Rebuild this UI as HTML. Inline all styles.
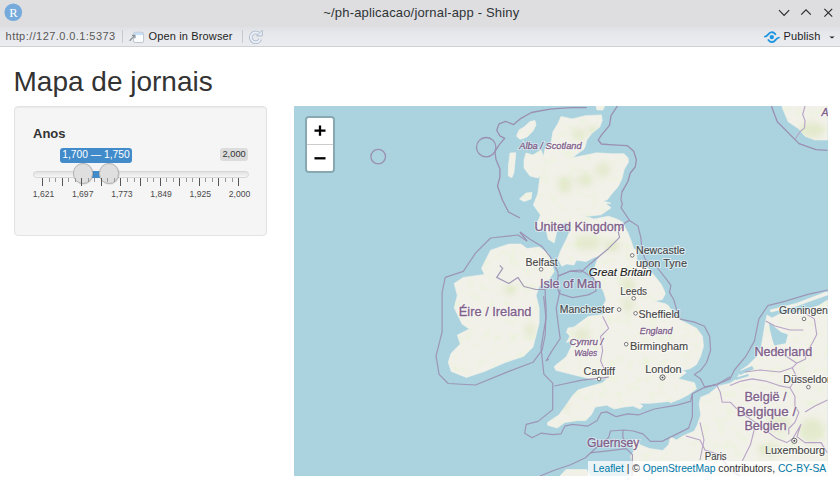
<!DOCTYPE html>
<html><head><meta charset="utf-8">
<style>
*{margin:0;padding:0;box-sizing:border-box}
html,body{width:840px;height:495px;overflow:hidden;background:#fff;font-family:"Liberation Sans",sans-serif;position:relative}
.abs{position:absolute;white-space:nowrap}
#title{left:0;top:0;width:840px;height:27px;background:#dedee1}
#tb{left:0;top:26.5px;width:840px;height:20.5px;background:linear-gradient(#dfe0e3 0,#e6e7ea 5px,#ebecef 100%);border-bottom:1px solid #cfd0d4}
.sep{width:1px;height:13px;background:#c8c9cc;top:30px}
#well{left:14px;top:106px;width:252.5px;height:129.5px;background:#f5f5f5;border:1px solid #e3e3e3;border-radius:4px;box-shadow:inset 0 1px 1px rgba(0,0,0,.05)}
#map{left:294px;top:106px;width:533.5px;height:370px;background:#aad3df;overflow:hidden}
.handle{top:163px;width:20.6px;height:20.6px;border-radius:50%;background:#dfdfdf;border:1px solid #b4b4b4;box-shadow:0.5px 0.5px 1px rgba(0,0,0,.15)}
.glab{top:188.6px;width:40px;text-align:center;font-size:8.6px;color:#4a4a4a}
</style></head><body>
<div id="title" class="abs"></div>
<svg class="abs" style="left:0;top:0" width="840" height="47">
<circle cx="13.3" cy="12.2" r="8.8" fill="#75aadb"/>
<text x="13.3" y="16.6" text-anchor="middle" font-family="Liberation Serif" font-size="12.5" fill="#fff">R</text>
<path d="M779 10.2 L784.1 15.4 L789.2 10.2" fill="none" stroke="#2a2a2a" stroke-width="1.15"/>
<path d="M801.2 14.6 L806 9.8 L810.8 14.6" fill="none" stroke="#2a2a2a" stroke-width="1.15"/>
<path d="M824.4 8.8 L832.2 16.6 M832.2 8.8 L824.4 16.6" fill="none" stroke="#2a2a2a" stroke-width="1.15"/>
</svg>
<div class="abs" style="left:323.3px;top:5.2px;font-size:13px;letter-spacing:0.17px;color:#2e3436">~/ph-aplicacao/jornal-app - Shiny</div>
<div id="tb" class="abs"></div>
<div class="abs" style="left:5.6px;top:30.2px;font-size:11px;letter-spacing:0.43px;color:#585858">http://127.0.0.1:5373</div>
<div class="abs sep" style="left:121.5px"></div>
<div class="abs sep" style="left:242px"></div>
<svg class="abs" style="left:124px;top:27px" width="24" height="20">
<rect x="9.6" y="5.3" width="10" height="10.2" rx="1.5" fill="#fbfcfd" stroke="#b9c0c8" stroke-width="0.9"/>
<rect x="10.1" y="5.8" width="9" height="2.3" fill="#c6e1f7"/>
<path d="M5.6 13.7 L10.6 8.6 M8 8.4 L10.9 8.4 L10.9 11.3" fill="none" stroke="#8a949c" stroke-width="1.3"/>
</svg>
<div class="abs" style="left:148.6px;top:30.2px;font-size:11px;letter-spacing:0.14px;color:#1e1e1e">Open in Browser</div>
<svg class="abs" style="left:244px;top:27px" width="24" height="20">
<path d="M16.3 12.2 A4.9 4.9 0 1 1 14.6 6.4" fill="none" stroke="#aab6c6" stroke-width="3.6"/>
<path d="M16.3 12.2 A4.9 4.9 0 1 1 14.6 6.4" fill="none" stroke="#e9f0fa" stroke-width="2"/>
<path d="M12.6 8.9 L18.3 8.9 L18.3 3.2 Z" fill="#e9f0fa" stroke="#aab6c6" stroke-width="0.9" stroke-linejoin="round"/>
</svg>
<svg class="abs" style="left:760px;top:27px" width="80" height="20">
<path d="M4.9 9.6 C6.2 9.6 7.2 8.6 8.2 7.4 C9.6 5.6 11 5 12.4 5.2 C13.8 5.4 14.8 6.4 15.4 7.2" fill="none" stroke="#1f96e2" stroke-width="1.9" stroke-linecap="round"/>
<path d="M18.9 10.6 C17.6 10.6 16.6 11.6 15.6 12.8 C14.2 14.6 12.8 15.2 11.4 15 C10 14.8 9 13.8 8.4 13" fill="none" stroke="#1f96e2" stroke-width="1.9" stroke-linecap="round"/>
<circle cx="11.8" cy="10.1" r="2.2" fill="#1f96e2"/>
<path d="M69.3 9.4 L74.7 9.4 L72 11.6 Z" fill="#222"/>
</svg>
<div class="abs" style="left:783.6px;top:30.2px;font-size:11px;letter-spacing:0.1px;color:#1e1e1e">Publish</div>

<div class="abs" style="left:13.5px;top:65.5px;font-size:28px;color:#333">Mapa de jornais</div>
<div id="well" class="abs"></div>
<div class="abs" style="left:33px;top:126px;font-size:13px;font-weight:bold;color:#333">Anos</div>


<div class="abs" style="left:32.5px;top:170.8px;width:216px;height:6.8px;border-radius:4px;background:linear-gradient(#e2e2e2,#f6f6f6);border:1px solid #d6d6d6"></div>
<div class="abs" style="left:83px;top:170.8px;width:26px;height:6.8px;background:#428bca"></div>
<div class="abs handle" style="left:72.5px"></div>
<div class="abs handle" style="left:98.7px"></div>
<div class="abs" style="left:60px;top:148px;width:72px;height:14.5px;border-radius:3px;background:#428bca;color:#fff;font-size:10.3px;line-height:14.5px;text-align:center">1,700 — 1,750</div>
<div class="abs" style="left:220px;top:148.2px;width:28.2px;height:12.5px;border-radius:3px;background:#dcdcdc;color:#333;font-size:9.3px;line-height:12.5px;text-align:center">2,000</div>
<div class="abs" style="left:42.0px;top:178px;width:1px;height:7.5px;background:#555"></div>
<div class="abs" style="left:48.5px;top:178px;width:1px;height:3.5px;background:#999"></div>
<div class="abs" style="left:55.1px;top:178px;width:1px;height:3.5px;background:#999"></div>
<div class="abs" style="left:61.6px;top:178px;width:1px;height:7.5px;background:#555"></div>
<div class="abs" style="left:68.1px;top:178px;width:1px;height:3.5px;background:#999"></div>
<div class="abs" style="left:74.7px;top:178px;width:1px;height:3.5px;background:#999"></div>
<div class="abs" style="left:81.2px;top:178px;width:1px;height:7.5px;background:#555"></div>
<div class="abs" style="left:87.7px;top:178px;width:1px;height:3.5px;background:#999"></div>
<div class="abs" style="left:94.3px;top:178px;width:1px;height:3.5px;background:#999"></div>
<div class="abs" style="left:100.8px;top:178px;width:1px;height:7.5px;background:#555"></div>
<div class="abs" style="left:107.3px;top:178px;width:1px;height:3.5px;background:#999"></div>
<div class="abs" style="left:113.9px;top:178px;width:1px;height:3.5px;background:#999"></div>
<div class="abs" style="left:120.4px;top:178px;width:1px;height:7.5px;background:#555"></div>
<div class="abs" style="left:126.9px;top:178px;width:1px;height:3.5px;background:#999"></div>
<div class="abs" style="left:133.5px;top:178px;width:1px;height:3.5px;background:#999"></div>
<div class="abs" style="left:140.0px;top:178px;width:1px;height:7.5px;background:#555"></div>
<div class="abs" style="left:146.5px;top:178px;width:1px;height:3.5px;background:#999"></div>
<div class="abs" style="left:153.1px;top:178px;width:1px;height:3.5px;background:#999"></div>
<div class="abs" style="left:159.6px;top:178px;width:1px;height:7.5px;background:#555"></div>
<div class="abs" style="left:166.1px;top:178px;width:1px;height:3.5px;background:#999"></div>
<div class="abs" style="left:172.7px;top:178px;width:1px;height:3.5px;background:#999"></div>
<div class="abs" style="left:179.2px;top:178px;width:1px;height:7.5px;background:#555"></div>
<div class="abs" style="left:185.7px;top:178px;width:1px;height:3.5px;background:#999"></div>
<div class="abs" style="left:192.3px;top:178px;width:1px;height:3.5px;background:#999"></div>
<div class="abs" style="left:198.8px;top:178px;width:1px;height:7.5px;background:#555"></div>
<div class="abs" style="left:205.3px;top:178px;width:1px;height:3.5px;background:#999"></div>
<div class="abs" style="left:211.9px;top:178px;width:1px;height:3.5px;background:#999"></div>
<div class="abs" style="left:218.4px;top:178px;width:1px;height:7.5px;background:#555"></div>
<div class="abs" style="left:224.9px;top:178px;width:1px;height:3.5px;background:#999"></div>
<div class="abs" style="left:231.5px;top:178px;width:1px;height:3.5px;background:#999"></div>
<div class="abs" style="left:238.0px;top:178px;width:1px;height:7.5px;background:#555"></div>
<div class="abs glab" style="left:23.5px">1,621</div>
<div class="abs glab" style="left:62.7px">1,697</div>
<div class="abs glab" style="left:101.9px">1,773</div>
<div class="abs glab" style="left:141.1px">1,849</div>
<div class="abs glab" style="left:180.3px">1,925</div>
<div class="abs glab" style="left:219.5px">2,000</div>

<!--MAP-->
<svg class="abs" style="left:294px;top:106px" width="533.5" height="370" viewBox="294 106 533.5 370">
<rect x="294" y="106" width="534" height="370" fill="#aad3df"/>
<defs><clipPath id="lc"><path d="M561.0,116.5 L572.3,118.9 L585.2,115.7 L601.4,114.9 L602.2,120.5 L599.8,127.0 L591.7,133.5 L586.8,140.0 L585.2,146.4 L583.6,149.6 L578.8,152.8 L572.3,157.7 L588.5,154.5 L596.5,152.8 L612.7,153.7 L624.0,153.7 L628.0,157.7 L628.5,162.1 L624.2,169.4 L621.8,179.1 L618.2,186.4 L612.1,193.6 L607.3,199.7 L603.0,201.0 L610.9,203.3 L605.4,203.5 L611.1,207.7 L601.2,214.8 L588.5,216.2 L580.0,214.8 L594.1,219.0 L608.3,216.2 L616.7,219.0 L622.4,221.9 L625.2,227.5 L628.1,233.2 L630.9,240.2 L633.7,248.7 L636.3,250.0 L637.0,259.9 L648.3,268.4 L655.4,276.9 L661.0,284.0 L663.8,289.6 L665.3,293.8 L662.4,299.5 L654.0,300.9 L665.3,303.7 L668.0,305.2 L671.0,309.4 L675.0,316.0 L680.3,320.1 L688.4,324.1 L696.5,328.2 L702.5,336.3 L703.5,346.4 L700.5,356.5 L696.5,364.5 L690.4,368.6 L682.3,370.6 L686.4,372.6 L678.3,378.7 L686.4,380.7 L694.4,382.7 L696.5,388.8 L688.4,394.8 L680.3,398.9 L670.2,402.9 L669.5,401.4 L650.5,403.3 L639.0,403.3 L643.0,406.0 L640.0,409.0 L633.0,406.0 L623.8,407.1 L614.3,409.0 L606.7,405.2 L595.2,407.1 L591.4,414.8 L585.7,420.5 L578.1,420.5 L564.8,422.4 L557.1,428.1 L547.6,425.2 L547.6,422.4 L559.0,414.8 L568.6,401.4 L572.4,395.7 L578.1,390.0 L585.8,387.5 L602.8,382.7 L607.6,377.8 L597.9,380.3 L585.8,377.8 L571.2,374.2 L556.7,370.6 L556.2,370.8 L554.1,366.8 L556.2,364.7 L566.3,356.7 L570.3,348.6 L574.0,340.0 L566.3,342.5 L570.0,336.0 L566.3,332.4 L568.0,328.0 L574.0,327.0 L580.4,322.3 L588.5,316.3 L604.6,314.2 L603.0,306.0 L606.0,300.0 L604.0,292.7 L600.0,284.5 L593.3,277.2 L594.5,267.5 L597.0,260.2 L600.6,255.4 L593.3,257.8 L586.1,261.5 L576.4,260.2 L573.9,265.1 L566.7,263.9 L561.8,266.3 L557.9,258.6 L560.3,251.4 L566.4,239.2 L570.0,230.8 L566.0,222.0 L560.0,226.0 L556.7,232.0 L554.2,242.9 L548.2,239.2 L545.8,228.3 L544.4,220.4 L533.3,204.9 L537.8,193.8 L540.0,176.0 L540.0,170.6 L543.2,159.3 L544.8,149.6 L551.3,141.5 L552.9,131.8 L557.8,123.8 Z M490.6,250.2 L508.8,244.1 L520.9,244.1 L527.0,248.6 L539.1,247.1 L548.2,253.2 L551.2,262.3 L554.2,271.4 L548.2,280.5 L539.1,286.5 L536.1,295.6 L539.1,307.7 L539.1,322.9 L536.1,335.0 L533.0,347.1 L523.9,356.2 L505.8,362.3 L484.5,371.4 L466.4,377.4 L451.2,371.4 L448.2,362.3 L451.2,353.2 L460.3,344.1 L457.3,335.0 L469.4,328.9 L462.0,324.0 L454.2,307.7 L457.3,295.6 L454.2,283.5 L463.3,277.4 L484.5,274.4 L481.5,268.3 L484.5,262.3 Z M827.5,300.0 L818.9,305.6 L796.7,312.2 L778.9,314.4 L772.0,318.0 L767.0,315.0 L765.6,321.1 L763.3,334.4 L761.1,347.8 L756.7,356.7 L747.8,365.6 L741.1,370.0 L736.7,378.9 L730.0,383.3 L718.5,385.9 L708.8,393.9 L700.7,397.2 L699.1,403.6 L700.7,415.0 L697.5,424.6 L694.2,431.1 L682.9,436.0 L676.5,440.0 L670.5,437.1 L668.6,444.8 L662.9,450.5 L649.5,448.6 L640.0,444.8 L636.2,439.0 L632.4,442.9 L634.3,450.5 L630.5,456.2 L632.4,463.8 L630.0,476.0 L827.5,476.0 Z M782.1,106.0 L782.1,107.3 L788.2,121.8 L799.0,129.0 L805.0,136.3 L814.8,140.0 L827.5,140.0 L827.5,106.0 Z M530.0,121.5 L535.0,120.5 L536.0,125.0 L533.0,131.0 L527.0,137.0 L520.0,139.5 L516.5,136.0 L519.0,130.0 L524.0,127.0 Z M526.0,153.0 L533.0,155.0 L541.0,150.0 L545.0,160.0 L543.0,172.0 L538.0,178.0 L530.0,176.0 L524.0,168.0 L524.0,160.0 Z M510.0,153.0 L515.8,152.7 L515.0,162.0 L514.0,172.0 L512.0,177.7 L508.3,176.0 L508.5,165.0 Z M566.0,469.5 L586.7,469.5 L590.0,476.0 L560.0,476.0 Z M596.0,106.0 L604.6,106.0 L603.0,110.0 L597.0,110.0 Z M770.0,310.0 L796.7,303.3 L807.8,298.9 L825.6,292.2 L827.5,292.0 L827.5,295.0 L809.0,301.5 L797.0,306.0 L771.0,312.0 Z M519.5,199.0 L526.0,193.0 L532.0,192.5 L531.0,199.0 L524.0,201.5 Z M541.0,214.0 L545.0,210.0 L547.0,216.0 L544.0,228.0 L539.0,232.0 L536.0,226.0 Z"/></clipPath><filter id="nz" x="0" y="0" width="100%" height="100%"><feTurbulence type="fractalNoise" baseFrequency="0.12" numOctaves="2" seed="7"/><feColorMatrix type="matrix" values="0 0 0 0 0.82 0 0 0 0 0.89 0 0 0 0 0.70 2.4 0 0 0 -1.22"/></filter><filter id="bl" x="-50%" y="-50%" width="200%" height="200%"><feGaussianBlur stdDeviation="3"/></filter></defs>
<path d="M561.0,116.5 L572.3,118.9 L585.2,115.7 L601.4,114.9 L602.2,120.5 L599.8,127.0 L591.7,133.5 L586.8,140.0 L585.2,146.4 L583.6,149.6 L578.8,152.8 L572.3,157.7 L588.5,154.5 L596.5,152.8 L612.7,153.7 L624.0,153.7 L628.0,157.7 L628.5,162.1 L624.2,169.4 L621.8,179.1 L618.2,186.4 L612.1,193.6 L607.3,199.7 L603.0,201.0 L610.9,203.3 L605.4,203.5 L611.1,207.7 L601.2,214.8 L588.5,216.2 L580.0,214.8 L594.1,219.0 L608.3,216.2 L616.7,219.0 L622.4,221.9 L625.2,227.5 L628.1,233.2 L630.9,240.2 L633.7,248.7 L636.3,250.0 L637.0,259.9 L648.3,268.4 L655.4,276.9 L661.0,284.0 L663.8,289.6 L665.3,293.8 L662.4,299.5 L654.0,300.9 L665.3,303.7 L668.0,305.2 L671.0,309.4 L675.0,316.0 L680.3,320.1 L688.4,324.1 L696.5,328.2 L702.5,336.3 L703.5,346.4 L700.5,356.5 L696.5,364.5 L690.4,368.6 L682.3,370.6 L686.4,372.6 L678.3,378.7 L686.4,380.7 L694.4,382.7 L696.5,388.8 L688.4,394.8 L680.3,398.9 L670.2,402.9 L669.5,401.4 L650.5,403.3 L639.0,403.3 L643.0,406.0 L640.0,409.0 L633.0,406.0 L623.8,407.1 L614.3,409.0 L606.7,405.2 L595.2,407.1 L591.4,414.8 L585.7,420.5 L578.1,420.5 L564.8,422.4 L557.1,428.1 L547.6,425.2 L547.6,422.4 L559.0,414.8 L568.6,401.4 L572.4,395.7 L578.1,390.0 L585.8,387.5 L602.8,382.7 L607.6,377.8 L597.9,380.3 L585.8,377.8 L571.2,374.2 L556.7,370.6 L556.2,370.8 L554.1,366.8 L556.2,364.7 L566.3,356.7 L570.3,348.6 L574.0,340.0 L566.3,342.5 L570.0,336.0 L566.3,332.4 L568.0,328.0 L574.0,327.0 L580.4,322.3 L588.5,316.3 L604.6,314.2 L603.0,306.0 L606.0,300.0 L604.0,292.7 L600.0,284.5 L593.3,277.2 L594.5,267.5 L597.0,260.2 L600.6,255.4 L593.3,257.8 L586.1,261.5 L576.4,260.2 L573.9,265.1 L566.7,263.9 L561.8,266.3 L557.9,258.6 L560.3,251.4 L566.4,239.2 L570.0,230.8 L566.0,222.0 L560.0,226.0 L556.7,232.0 L554.2,242.9 L548.2,239.2 L545.8,228.3 L544.4,220.4 L533.3,204.9 L537.8,193.8 L540.0,176.0 L540.0,170.6 L543.2,159.3 L544.8,149.6 L551.3,141.5 L552.9,131.8 L557.8,123.8 Z M490.6,250.2 L508.8,244.1 L520.9,244.1 L527.0,248.6 L539.1,247.1 L548.2,253.2 L551.2,262.3 L554.2,271.4 L548.2,280.5 L539.1,286.5 L536.1,295.6 L539.1,307.7 L539.1,322.9 L536.1,335.0 L533.0,347.1 L523.9,356.2 L505.8,362.3 L484.5,371.4 L466.4,377.4 L451.2,371.4 L448.2,362.3 L451.2,353.2 L460.3,344.1 L457.3,335.0 L469.4,328.9 L462.0,324.0 L454.2,307.7 L457.3,295.6 L454.2,283.5 L463.3,277.4 L484.5,274.4 L481.5,268.3 L484.5,262.3 Z M827.5,300.0 L818.9,305.6 L796.7,312.2 L778.9,314.4 L772.0,318.0 L767.0,315.0 L765.6,321.1 L763.3,334.4 L761.1,347.8 L756.7,356.7 L747.8,365.6 L741.1,370.0 L736.7,378.9 L730.0,383.3 L718.5,385.9 L708.8,393.9 L700.7,397.2 L699.1,403.6 L700.7,415.0 L697.5,424.6 L694.2,431.1 L682.9,436.0 L676.5,440.0 L670.5,437.1 L668.6,444.8 L662.9,450.5 L649.5,448.6 L640.0,444.8 L636.2,439.0 L632.4,442.9 L634.3,450.5 L630.5,456.2 L632.4,463.8 L630.0,476.0 L827.5,476.0 Z M782.1,106.0 L782.1,107.3 L788.2,121.8 L799.0,129.0 L805.0,136.3 L814.8,140.0 L827.5,140.0 L827.5,106.0 Z M530.0,121.5 L535.0,120.5 L536.0,125.0 L533.0,131.0 L527.0,137.0 L520.0,139.5 L516.5,136.0 L519.0,130.0 L524.0,127.0 Z M526.0,153.0 L533.0,155.0 L541.0,150.0 L545.0,160.0 L543.0,172.0 L538.0,178.0 L530.0,176.0 L524.0,168.0 L524.0,160.0 Z M510.0,153.0 L515.8,152.7 L515.0,162.0 L514.0,172.0 L512.0,177.7 L508.3,176.0 L508.5,165.0 Z M566.0,469.5 L586.7,469.5 L590.0,476.0 L560.0,476.0 Z M596.0,106.0 L604.6,106.0 L603.0,110.0 L597.0,110.0 Z M770.0,310.0 L796.7,303.3 L807.8,298.9 L825.6,292.2 L827.5,292.0 L827.5,295.0 L809.0,301.5 L797.0,306.0 L771.0,312.0 Z M519.5,199.0 L526.0,193.0 L532.0,192.5 L531.0,199.0 L524.0,201.5 Z M541.0,214.0 L545.0,210.0 L547.0,216.0 L544.0,228.0 L539.0,232.0 L536.0,226.0 Z" fill="#f2f1e9" stroke="#f2f1e9" stroke-width="0.6" stroke-linejoin="round"/>
<g clip-path="url(#lc)"><rect x="294" y="106" width="534" height="370" filter="url(#nz)"/>
<ellipse cx="579" cy="134" rx="7" ry="5" fill="#d6e2b2" opacity="0.5" filter="url(#bl)"/>
<ellipse cx="593" cy="130" rx="5" ry="4" fill="#d6e2b2" opacity="0.5" filter="url(#bl)"/>
<ellipse cx="603" cy="170" rx="8" ry="6" fill="#d6e2b2" opacity="0.5" filter="url(#bl)"/>
<ellipse cx="585" cy="180" rx="8" ry="6" fill="#d6e2b2" opacity="0.5" filter="url(#bl)"/>
<ellipse cx="565" cy="185" rx="7" ry="8" fill="#d6e2b2" opacity="0.5" filter="url(#bl)"/>
<ellipse cx="588" cy="243" rx="12" ry="7" fill="#d6e2b2" opacity="0.5" filter="url(#bl)"/>
<ellipse cx="612" cy="246" rx="8" ry="6" fill="#d6e2b2" opacity="0.5" filter="url(#bl)"/>
<ellipse cx="628" cy="285" rx="6" ry="8" fill="#d6e2b2" opacity="0.5" filter="url(#bl)"/>
<ellipse cx="628" cy="305" rx="5" ry="7" fill="#d6e2b2" opacity="0.5" filter="url(#bl)"/>
<ellipse cx="582" cy="335" rx="8" ry="6" fill="#d6e2b2" opacity="0.5" filter="url(#bl)"/>
<ellipse cx="563" cy="405" rx="5" ry="5" fill="#d6e2b2" opacity="0.5" filter="url(#bl)"/>
<ellipse cx="778" cy="424" rx="12" ry="8" fill="#d6e2b2" opacity="0.5" filter="url(#bl)"/>
<ellipse cx="812" cy="430" rx="12" ry="12" fill="#d6e2b2" opacity="0.5" filter="url(#bl)"/>
<ellipse cx="812" cy="130" rx="12" ry="8" fill="#d6e2b2" opacity="0.5" filter="url(#bl)"/>
<ellipse cx="530" cy="330" rx="5" ry="6" fill="#d6e2b2" opacity="0.5" filter="url(#bl)"/>
<ellipse cx="510" cy="290" rx="6" ry="5" fill="#d6e2b2" opacity="0.5" filter="url(#bl)"/>
<ellipse cx="770" cy="450" rx="12" ry="6" fill="#d6e2b2" opacity="0.5" filter="url(#bl)"/>
</g>
<path d="M768.9,322.2 L781.1,332.2 L787.8,334.4 L785.6,343.3 L774.4,345.6 L772.2,338.9 L770.0,330.0 Z" fill="#aad3df"/><path d="M738,372 L752,366 L754,369 L740,375Z M735,378 L748,374 L749,376 L736,380Z" fill="#aad3df"/>
<path d="M550.0,109.2 L559.4,108.4 L571.7,107.7 L586.7,107.7" fill="none" stroke="#9b8fb1" stroke-width="1.3" stroke-linejoin="round"/>
<path d="M617.5,106.0 L611.0,115.7 L609.5,125.4 L601.4,135.1 L598.2,140.0 L601.4,144.0 L612.7,144.8 L627.2,145.6 L633.7,151.2 L636.4,159.7 L635.2,167.0 L630.3,173.0 L627.9,181.5 L621.8,192.4" fill="none" stroke="#9b8fb1" stroke-width="1.3" stroke-linejoin="round"/>
<path d="M550.0,109.2 L531.4,112.5 L520.1,118.9 L513.6,124.6 L505.6,121.4 L499.1,123.8 L496.7,130.2 L499.9,135.9 L504.7,138.3 L499.1,144.8 L495.0,151.3 L495.9,159.3 L499.9,169.0 L499.9,177.1 L497.5,186.0 L502.4,200.0 L508.5,212.0 L520.0,218.0" fill="none" stroke="#9b8fb1" stroke-width="1.3" stroke-linejoin="round"/>
<path d="M527.0,241.1 L520.0,232.0" fill="none" stroke="#9b8fb1" stroke-width="1.3" stroke-linejoin="round"/>
<path d="M771.8,106.0 L771.8,107.3 L777.3,121.8 L799.0,143.6 L816.0,149.7 L827.5,150.3" fill="none" stroke="#9b8fb1" stroke-width="1.3" stroke-linejoin="round"/>
<circle cx="378.2" cy="156.6" r="7.3" fill="none" stroke="#9b8fb1" stroke-width="1.3"/>
<circle cx="486.2" cy="147.2" r="9.7" fill="none" stroke="#9b8fb1" stroke-width="1.3"/>
<path d="M629.5,220.4 L625.2,222.6 L618.2,231.7 L619.6,237.4 L608.3,248.7 L599.8,255.8 L590.0,264.0 L581.0,272.0 L570.0,271.2 L558.2,276.0" fill="none" stroke="#9b8fb1" stroke-width="1.2" stroke-linejoin="round" opacity="0.9"/>
<path d="M621.8,192.4 L621.0,200.0 L622.4,203.5 L621.0,207.7 L629.5,220.4 L638.0,226.1 L640.8,237.4 L642.2,251.5 L645.5,259.9 L656.8,267.0 L666.7,279.7 L670.9,285.4 L669.5,292.4 L673.7,299.5 L676.6,309.4 L680.3,319.1 L694.4,322.1 L704.5,326.2 L709.6,336.3 L710.6,350.4 L706.6,362.5 L700.5,370.6 L694.4,374.6 L700.5,378.7 L704.5,386.8 L716.7,384.7 L730.0,376.7" fill="none" stroke="#9b8fb1" stroke-width="1.2" stroke-linejoin="round" opacity="0.9"/>
<path d="M556.7,285.7 L559.4,293.6 L572.5,297.6 L588.2,294.9 L596.1,291.0 L593.5,277.9 L580.4,270.0 L570.0,271.2 L558.2,276.0 L556.7,285.7" fill="none" stroke="#9b8fb1" stroke-width="1.2" stroke-linejoin="round" opacity="0.9"/>
<path d="M499.7,265.3 L502.7,268.3 L496.7,277.4 L508.8,283.5 L517.9,277.4 L523.9,286.5 L536.1,289.5 L545.2,289.5 L545.2,295.6 L546.2,309.4 L545.2,335.0 L542.1,350.2 L533.0,362.3 L508.8,371.4 L475.5,385.0 L448.2,383.5 L439.1,374.4 L436.0,356.2 L442.1,331.8 L442.1,292.6 L445.2,277.4 L463.3,271.4 L475.5,253.2 L490.6,238.0 L517.9,235.0 L527.0,241.1" fill="none" stroke="#9b8fb1" stroke-width="1.2" stroke-linejoin="round" opacity="0.9"/>
<path d="M520.0,232.0 L530.0,239.2 L542.1,246.5 L550.6,257.4 L557.9,272.0 L558.2,276.0" fill="none" stroke="#9b8fb1" stroke-width="1.2" stroke-linejoin="round" opacity="0.9"/>
<path d="M543.6,296.2 L546.0,318.0 L541.0,347.7 L543.9,374.2 L552.7,383.1 L552.7,409.6 L538.0,421.4 L526.2,424.4 L524.7,433.2 L532.1,437.7 L541.0,433.2 L552.7,434.7 L561.0,433.8 L564.8,426.2 L572.4,424.3 L587.6,426.2 L597.1,420.5 L601.0,412.9 L606.7,411.9 L616.2,416.7 L627.6,413.8 L639.0,414.8 L654.3,409.0 L677.1,405.2 L690.5,401.4 L692.4,393.8 L703.0,388.1" fill="none" stroke="#9b8fb1" stroke-width="1.2" stroke-linejoin="round" opacity="0.9"/>
<path d="M560.2,290.0 L556.2,308.2 L558.2,324.3 L560.2,338.5 L552.1,350.6 L546.1,360.7 L548.9,359.2" fill="none" stroke="#9b8fb1" stroke-width="1.2" stroke-linejoin="round" opacity="0.9"/>
<path d="M554.2,386.0 L582.2,380.1 L608.8,377.2" fill="none" stroke="#9b8fb1" stroke-width="1.2" stroke-linejoin="round" opacity="0.9"/>
<path d="M703.0,388.1 L716.9,384.2 L730.0,378.9 L734.4,370.0 L745.6,356.7 L754.4,341.1 L758.9,318.9 L767.8,305.6 L785.6,301.1 L807.8,294.4 L827.8,290.0" fill="none" stroke="#9b8fb1" stroke-width="1.2" stroke-linejoin="round" opacity="0.9"/>
<path d="M692.4,393.8 L692.4,416.7 L688.6,428.1 L661.9,441.4 L650.5,441.4 L642.9,433.8 L633.3,431.0 L623.8,430.0 L610.5,431.0 L608.6,437.6 L596.0,448.0 L585.0,458.0 L570.0,465.0 L555.0,470.0" fill="none" stroke="#9b8fb1" stroke-width="1.2" stroke-linejoin="round" opacity="0.9"/>
<path d="M622.9,430.0 L622.9,437.6 L628.0,445.0" fill="none" stroke="#9b8fb1" stroke-width="1.2" stroke-linejoin="round" opacity="0.9"/>
<path d="M590.0,452.8 L610.0,450.6 L626.3,448.6 L632.4,454.6 L632.0,476.0" fill="none" stroke="#9b8fb1" stroke-width="1.2" stroke-linejoin="round" opacity="0.9"/>
<path d="M540.0,476.0 L555.0,470.0" fill="none" stroke="#9b8fb1" stroke-width="1.2" stroke-linejoin="round" opacity="0.9"/>
<path d="M602.6,316.3 L608.7,328.4 L600.6,336.5 L602.6,350.6 L600.6,360.7 L606.7,374.8" fill="none" stroke="#b7a3c6" stroke-width="1.1" stroke-linejoin="round"/>
<path d="M716.1,384.1 L720.2,392.1 L722.2,402.2 L730.3,402.2 L736.3,408.3 L746.4,416.4 L758.5,424.4 L768.6,432.5 L776.7,438.6 L786.8,442.6 L792.9,438.6 L800.9,424.4 L796.9,436.6 L805.0,442.6 L821.1,442.6 L827.2,452.7" fill="none" stroke="#b7a3c6" stroke-width="1.1" stroke-linejoin="round"/>
<path d="M730.0,385.6 L741.1,381.1 L752.2,378.9 L765.6,381.1 L778.9,385.6 L790.0,387.8" fill="none" stroke="#b7a3c6" stroke-width="1.1" stroke-linejoin="round"/>
<path d="M803.3,312.2 L814.4,318.9 L816.7,334.4 L812.2,343.3 L805.6,354.4 L805.6,358.9 L796.7,363.3 L792.2,367.8 L796.7,376.7 L790.0,387.8 L794.9,396.2 L794.9,406.3 L798.9,412.3 L794.9,422.4 L788.8,428.5 L788.8,434.5" fill="none" stroke="#b7a3c6" stroke-width="1.1" stroke-linejoin="round"/>
<path d="M754.5,428.5 L750.5,444.6 L742.4,460.8" fill="none" stroke="#b7a3c6" stroke-width="1.1" stroke-linejoin="round"/>
<path d="M686.0,436.0 L700.0,440.0 L705.0,450.0 L720.0,455.0 L730.0,470.0 L740.0,476.0" fill="none" stroke="#b7a3c6" stroke-width="1.1" stroke-linejoin="round"/>
<path d="M700.0,422.4 L704.0,440.0 L700.0,460.0" fill="none" stroke="#b7a3c6" stroke-width="1.1" stroke-linejoin="round"/>
<path d="M805.0,412.0 L815.0,406.0 L827.5,400.0" fill="none" stroke="#b7a3c6" stroke-width="1.1" stroke-linejoin="round"/>
<path d="M765.6,321.1 L775.0,326.0 L790.0,330.0 L803.3,330.0" fill="none" stroke="#b7a3c6" stroke-width="1.1" stroke-linejoin="round"/>
<path d="M763.0,350.0 L780.0,352.0 L796.7,363.3" fill="none" stroke="#b7a3c6" stroke-width="1.1" stroke-linejoin="round"/>
<path d="M745.0,372.0 L760.0,370.0 L780.0,372.0 L792.2,367.8" fill="none" stroke="#b7a3c6" stroke-width="1.1" stroke-linejoin="round"/>
<path d="M795.4,138.8 L800.3,131.5 L804.5,127.8 L805.0,120.6 L802.7,114.5 L805.0,106.0" fill="none" stroke="#b7a3c6" stroke-width="1.1" stroke-linejoin="round"/>
<g font-family="Liberation Sans, sans-serif"><text x="519.2" y="148.5" font-size="9.2" fill="none" style="font-style:italic;stroke:rgba(255,255,255,0.55);stroke-width:2px" textLength="62.5" lengthAdjust="spacingAndGlyphs">Alba / Scotland</text>
<text x="519.2" y="148.5" font-size="9.2" fill="#80608a" style="font-style:italic;stroke:#80608a;stroke-width:0.3px" textLength="62.5" lengthAdjust="spacingAndGlyphs">Alba / Scotland</text>
<text x="534.4" y="231" font-size="12.2" fill="none" style="stroke:rgba(255,255,255,0.55);stroke-width:2px" textLength="90.0" lengthAdjust="spacingAndGlyphs">United Kingdom</text>
<text x="534.4" y="231" font-size="12.2" fill="#80608a" style="stroke:#80608a;stroke-width:0.3px" textLength="90.0" lengthAdjust="spacingAndGlyphs">United Kingdom</text>
<text x="525.6" y="266" font-size="10.5" fill="none" style="stroke:rgba(255,255,255,0.55);stroke-width:2px" textLength="32.2" lengthAdjust="spacingAndGlyphs">Belfast</text>
<text x="525.6" y="266" font-size="10.5" fill="#464646" style="stroke:#464646;stroke-width:0.12px" textLength="32.2" lengthAdjust="spacingAndGlyphs">Belfast</text>
<text x="636" y="254" font-size="10.5" fill="none" style="stroke:rgba(255,255,255,0.55);stroke-width:2px" textLength="49.0" lengthAdjust="spacingAndGlyphs">Newcastle</text>
<text x="636" y="254" font-size="10.5" fill="#464646" style="stroke:#464646;stroke-width:0.12px" textLength="49.0" lengthAdjust="spacingAndGlyphs">Newcastle</text>
<text x="636" y="266.5" font-size="10.5" fill="none" style="stroke:rgba(255,255,255,0.55);stroke-width:2px" textLength="51.0" lengthAdjust="spacingAndGlyphs">upon Tyne</text>
<text x="636" y="266.5" font-size="10.5" fill="#464646" style="stroke:#464646;stroke-width:0.12px" textLength="51.0" lengthAdjust="spacingAndGlyphs">upon Tyne</text>
<text x="588.8" y="275.7" font-size="10.5" fill="none" style="font-style:italic;stroke:rgba(255,255,255,0.55);stroke-width:2px" textLength="63.0" lengthAdjust="spacingAndGlyphs">Great Britain</text>
<text x="588.8" y="275.7" font-size="10.5" fill="#222" style="font-style:italic;stroke:#222;stroke-width:0.12px" textLength="63.0" lengthAdjust="spacingAndGlyphs">Great Britain</text>
<text x="540" y="288.1" font-size="12.2" fill="none" style="stroke:rgba(255,255,255,0.55);stroke-width:2px" textLength="61.2" lengthAdjust="spacingAndGlyphs">Isle of Man</text>
<text x="540" y="288.1" font-size="12.2" fill="#80608a" style="stroke:#80608a;stroke-width:0.3px" textLength="61.2" lengthAdjust="spacingAndGlyphs">Isle of Man</text>
<text x="620.3" y="295.1" font-size="10.5" fill="none" style="stroke:rgba(255,255,255,0.55);stroke-width:2px" textLength="26.7" lengthAdjust="spacingAndGlyphs">Leeds</text>
<text x="620.3" y="295.1" font-size="10.5" fill="#464646" style="stroke:#464646;stroke-width:0.12px" textLength="26.7" lengthAdjust="spacingAndGlyphs">Leeds</text>
<text x="559.7" y="313.3" font-size="10.5" fill="none" style="stroke:rgba(255,255,255,0.55);stroke-width:2px" textLength="54.6" lengthAdjust="spacingAndGlyphs">Manchester</text>
<text x="559.7" y="313.3" font-size="10.5" fill="#464646" style="stroke:#464646;stroke-width:0.12px" textLength="54.6" lengthAdjust="spacingAndGlyphs">Manchester</text>
<text x="638.5" y="318.1" font-size="10.5" fill="none" style="stroke:rgba(255,255,255,0.55);stroke-width:2px" textLength="41.2" lengthAdjust="spacingAndGlyphs">Sheffield</text>
<text x="638.5" y="318.1" font-size="10.5" fill="#464646" style="stroke:#464646;stroke-width:0.12px" textLength="41.2" lengthAdjust="spacingAndGlyphs">Sheffield</text>
<text x="639.7" y="333.9" font-size="9.2" fill="none" style="font-style:italic;stroke:rgba(255,255,255,0.55);stroke-width:2px" textLength="32.8" lengthAdjust="spacingAndGlyphs">England</text>
<text x="639.7" y="333.9" font-size="9.2" fill="#80608a" style="font-style:italic;stroke:#80608a;stroke-width:0.3px" textLength="32.8" lengthAdjust="spacingAndGlyphs">England</text>
<text x="569.4" y="344.8" font-size="9.2" fill="none" style="font-style:italic;stroke:rgba(255,255,255,0.55);stroke-width:2px" textLength="33.9" lengthAdjust="spacingAndGlyphs">Cymru /</text>
<text x="569.4" y="344.8" font-size="9.2" fill="#80608a" style="font-style:italic;stroke:#80608a;stroke-width:0.3px" textLength="33.9" lengthAdjust="spacingAndGlyphs">Cymru /</text>
<text x="574.2" y="355.7" font-size="9.2" fill="none" style="font-style:italic;stroke:rgba(255,255,255,0.55);stroke-width:2px" textLength="23.1" lengthAdjust="spacingAndGlyphs">Wales</text>
<text x="574.2" y="355.7" font-size="9.2" fill="#80608a" style="font-style:italic;stroke:#80608a;stroke-width:0.3px" textLength="23.1" lengthAdjust="spacingAndGlyphs">Wales</text>
<text x="630" y="349.7" font-size="10.5" fill="none" style="stroke:rgba(255,255,255,0.55);stroke-width:2px" textLength="58.2" lengthAdjust="spacingAndGlyphs">Birmingham</text>
<text x="630" y="349.7" font-size="10.5" fill="#464646" style="stroke:#464646;stroke-width:0.12px" textLength="58.2" lengthAdjust="spacingAndGlyphs">Birmingham</text>
<text x="583.4" y="375.4" font-size="10.5" fill="none" style="stroke:rgba(255,255,255,0.55);stroke-width:2px" textLength="31.5" lengthAdjust="spacingAndGlyphs">Cardiff</text>
<text x="583.4" y="375.4" font-size="10.5" fill="#464646" style="stroke:#464646;stroke-width:0.12px" textLength="31.5" lengthAdjust="spacingAndGlyphs">Cardiff</text>
<text x="645.2" y="373" font-size="10.5" fill="none" style="stroke:rgba(255,255,255,0.55);stroke-width:2px" textLength="36.4" lengthAdjust="spacingAndGlyphs">London</text>
<text x="645.2" y="373" font-size="10.5" fill="#464646" style="stroke:#464646;stroke-width:0.12px" textLength="36.4" lengthAdjust="spacingAndGlyphs">London</text>
<text x="587" y="447" font-size="12.2" fill="none" style="stroke:rgba(255,255,255,0.55);stroke-width:2px" textLength="52.2" lengthAdjust="spacingAndGlyphs">Guernsey</text>
<text x="587" y="447" font-size="12.2" fill="#80608a" style="stroke:#80608a;stroke-width:0.3px" textLength="52.2" lengthAdjust="spacingAndGlyphs">Guernsey</text>
<text x="458.8" y="315.6" font-size="12.2" fill="none" style="stroke:rgba(255,255,255,0.55);stroke-width:2px" textLength="72.7" lengthAdjust="spacingAndGlyphs">Éire / Ireland</text>
<text x="458.8" y="315.6" font-size="12.2" fill="#80608a" style="stroke:#80608a;stroke-width:0.3px" textLength="72.7" lengthAdjust="spacingAndGlyphs">Éire / Ireland</text>
<text x="754.4" y="355.6" font-size="12.2" fill="none" style="stroke:rgba(255,255,255,0.55);stroke-width:2px" textLength="57.8" lengthAdjust="spacingAndGlyphs">Nederland</text>
<text x="754.4" y="355.6" font-size="12.2" fill="#80608a" style="stroke:#80608a;stroke-width:0.3px" textLength="57.8" lengthAdjust="spacingAndGlyphs">Nederland</text>
<text x="778.9" y="314.4" font-size="10.5" fill="none" style="stroke:rgba(255,255,255,0.55);stroke-width:2px">Groningen</text>
<text x="778.9" y="314.4" font-size="10.5" fill="#464646" style="stroke:#464646;stroke-width:0.12px">Groningen</text>
<text x="783.3" y="383.3" font-size="10.5" fill="none" style="stroke:rgba(255,255,255,0.55);stroke-width:2px">Düsseldorf</text>
<text x="783.3" y="383.3" font-size="10.5" fill="#464646" style="stroke:#464646;stroke-width:0.12px">Düsseldorf</text>
<text x="744.4" y="400.5" font-size="12.2" fill="none" style="stroke:rgba(255,255,255,0.55);stroke-width:2px" textLength="42.2" lengthAdjust="spacingAndGlyphs">België /</text>
<text x="744.4" y="400.5" font-size="12.2" fill="#80608a" style="stroke:#80608a;stroke-width:0.3px" textLength="42.2" lengthAdjust="spacingAndGlyphs">België /</text>
<text x="736.7" y="415.5" font-size="12.2" fill="none" style="stroke:rgba(255,255,255,0.55);stroke-width:2px" textLength="59.5" lengthAdjust="spacingAndGlyphs">Belgique /</text>
<text x="736.7" y="415.5" font-size="12.2" fill="#80608a" style="stroke:#80608a;stroke-width:0.3px" textLength="59.5" lengthAdjust="spacingAndGlyphs">Belgique /</text>
<text x="744.4" y="429.5" font-size="12.2" fill="none" style="stroke:rgba(255,255,255,0.55);stroke-width:2px" textLength="42.2" lengthAdjust="spacingAndGlyphs">Belgien</text>
<text x="744.4" y="429.5" font-size="12.2" fill="#80608a" style="stroke:#80608a;stroke-width:0.3px" textLength="42.2" lengthAdjust="spacingAndGlyphs">Belgien</text>
<text x="765" y="454.2" font-size="10.5" fill="none" style="stroke:rgba(255,255,255,0.55);stroke-width:2px" textLength="60.0" lengthAdjust="spacingAndGlyphs">Luxembourg</text>
<text x="765" y="454.2" font-size="10.5" fill="#464646" style="stroke:#464646;stroke-width:0.12px" textLength="60.0" lengthAdjust="spacingAndGlyphs">Luxembourg</text>
<text x="704.7" y="459.7" font-size="10.5" fill="none" style="stroke:rgba(255,255,255,0.55);stroke-width:2px" textLength="22.0" lengthAdjust="spacingAndGlyphs">Paris</text>
<text x="704.7" y="459.7" font-size="10.5" fill="#464646" style="stroke:#464646;stroke-width:0.12px" textLength="22.0" lengthAdjust="spacingAndGlyphs">Paris</text>
<text x="821.5" y="115.8" font-size="10.5" fill="none" style="font-style:italic;stroke:rgba(255,255,255,0.55);stroke-width:2px">A</text>
<text x="821.5" y="115.8" font-size="10.5" fill="#80608a" style="font-style:italic;stroke:#80608a;stroke-width:0.3px">A</text>
<circle cx="541.1" cy="269.3" r="1.8" fill="#fff" stroke="#555" stroke-width="0.8"/>
<circle cx="632.2" cy="255.4" r="1.8" fill="#fff" stroke="#555" stroke-width="0.8"/>
<circle cx="633.7" cy="298.3" r="1.8" fill="#fff" stroke="#555" stroke-width="0.8"/>
<circle cx="619.1" cy="309.6" r="1.8" fill="#fff" stroke="#555" stroke-width="0.8"/>
<circle cx="635.6" cy="313.3" r="1.8" fill="#fff" stroke="#555" stroke-width="0.8"/>
<circle cx="626.2" cy="344.2" r="1.8" fill="#fff" stroke="#555" stroke-width="0.8"/>
<circle cx="599.1" cy="379" r="1.8" fill="#fff" stroke="#555" stroke-width="0.8"/>
<circle cx="804" cy="318.9" r="1.8" fill="#fff" stroke="#555" stroke-width="0.8"/>
<circle cx="808.4" cy="387.1" r="1.8" fill="#fff" stroke="#555" stroke-width="0.8"/>
<circle cx="662.5" cy="377.5" r="2.6" fill="#fff" stroke="#555" stroke-width="0.9"/><circle cx="662.5" cy="377.5" r="1.1" fill="#555"/>
<circle cx="794.3" cy="440.8" r="2.6" fill="#fff" stroke="#555" stroke-width="0.9"/><circle cx="794.3" cy="440.8" r="1.1" fill="#555"/></g>
</svg>
<!--/MAP-->
<div class="abs" style="left:304.8px;top:116.4px;width:30px;height:57px;border:2px solid rgba(0,0,0,0.2);border-radius:4px;background-clip:padding-box"></div>
<div class="abs" style="left:306.8px;top:118.4px;width:26px;height:53px;background:#fff;border-radius:2px"></div>
<div class="abs" style="left:306.8px;top:144.2px;width:26px;height:1px;background:#ccc"></div>
<svg class="abs" style="left:306.9px;top:118.4px" width="26" height="53">
<path d="M7.5 12.6 H18.5 M13 7.5 V17.8" stroke="#000" stroke-width="2.3"/>
<path d="M7.5 40.3 H18.5" stroke="#000" stroke-width="2.3"/>
</svg>
<div class="abs" style="left:588px;top:461px;width:239.5px;height:15px;background:rgba(255,255,255,0.75)"></div>
<div class="abs" style="left:593px;top:462px;font-size:10.3px;line-height:13px;color:#333"><span style="color:#0078a8">Leaflet</span> | © <span style="color:#0078a8">OpenStreetMap</span> contributors, <span style="color:#0078a8">CC-BY-SA</span></div>

</body></html>
